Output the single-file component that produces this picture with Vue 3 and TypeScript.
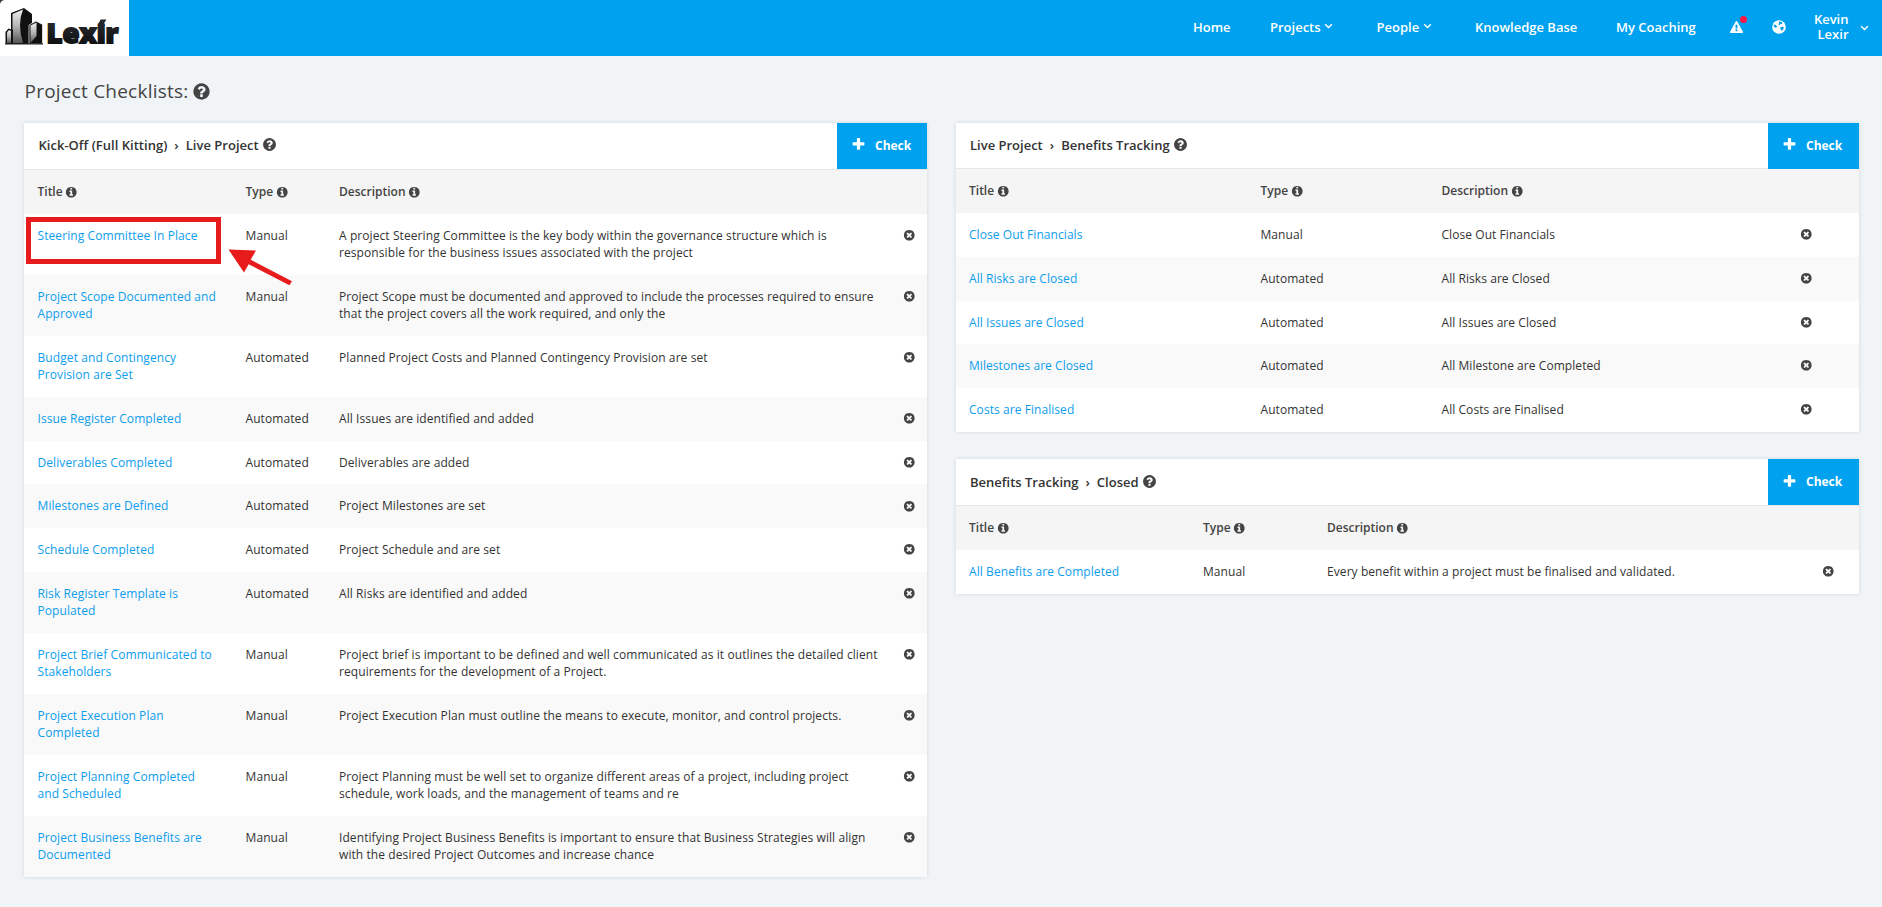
<script setup lang="ts">
interface Check {
  title: string
  type: 'Manual' | 'Automated'
  desc: string
  marked?: boolean
}
interface Panel {
  id: string
  from: string
  to: string
  rows: Check[]
}

const ring =
  'M1664 896q0 209-103 385.5t-279.5 279.5-385.5 103-385.5-103-279.5-279.5-103-385.5 103-385.5 279.5-279.5 385.5-103 385.5 103 279.5 279.5 103 385.5z'
const icons = {
  help:
    'M1024 1376v-192q0-14-9-23t-23-9h-192q-14 0-23 9t-9 23v192q0 14 9 23t23 9h192q14 0 23-9t9-23zM1280 704q0-88-55.5-163t-138.5-116-170-41q-243 0-371 213-15 24 8 42l132 100q7 6 19 6 16 0 25-12 53-68 86-92 34-24 86-24 48 0 85.5 26t37.5 59q0 38-20 61t-68 45q-63 28-115.5 86.5t-52.5 125.5v36q0 14 9 23t23 9h192q14 0 23-9t9-23q0-19 21.5-49.5t54.5-49.5q32-18 49-28.5t46-35 44.5-48 28-60.5 12.5-81z' + ring,
  info:
    'M1152 1376v-160q0-14-9-23t-23-9h-96v-512q0-14-9-23t-23-9h-320q-14 0-23 9t-9 23v160q0 14 9 23t23 9h96v320h-96q-14 0-23 9t-9 23v160q0 14 9 23t23 9h448q14 0 23-9t9-23zM1024 480v-160q0-14-9-23t-23-9h-192q-14 0-23 9t-9 23v160q0 14 9 23t23 9h192q14 0 23-9t9-23z' + ring,
  remove:
    'M1277 1122q0-26-19-45l-181-181 181-181q19-19 19-45 0-27-19-46l-90-90q-19-19-46-19-26 0-45 19l-181 181-181-181q-19-19-45-19-27 0-46 19l-90 90q-19 19-19 46 0 26 19 45l181 181-181 181q-19 19-19 45 0 27 19 46l90 90q19 19 46 19 26 0 45-19l181-181 181 181q19 19 45 19 27 0 46-19l90-90q19-19 19-46z' + ring,
  plus:
    'M1600 736v192q0 40-28 68t-68 28h-416v416q0 40-28 68t-68 28h-192q-40 0-68-28t-28-68v-416h-416q-40 0-68-28t-28-68v-192q0-40 28-68t68-28h416v-416q0-40 28-68t68-28h192q40 0 68 28t28 68v416h416q40 0 68 28t28 68z',
  warning:
    'M1024 1375v-190q0-14-9.5-23.5t-22.5-9.5h-192q-13 0-22.5 9.5t-9.5 23.5v190q0 14 9.5 23.5t22.5 9.5h192q13 0 22.5-9.5t9.5-23.5zM1022 1001l18-459q0-12-10-19-13-11-24-11h-220q-11 0-24 11-10 7-10 21l17 457q0 10 10 16.5t24 6.5h185q14 0 23.5-6.5t10.5-16.5zM1008 67l768 1408q35 63-2 126-17 29-46.5 46t-63.5 17h-1536q-34 0-63.5-17t-46.5-46q-37-63-2-126l768-1408q17-31 47-49t65-18 65 18 47 49z',
}

const columns: Panel[][] = [
  [
    {
      id: 'kickoff',
      from: 'Kick-Off (Full Kitting)',
      to: 'Live Project',
      rows: [
        { title: 'Steering Committee In Place', type: 'Manual', desc: 'A project Steering Committee is the key body within the governance structure which is\nresponsible for the business issues associated with the project', marked: true },
        { title: 'Project Scope Documented and\nApproved', type: 'Manual', desc: 'Project Scope must be documented and approved to include the processes required to ensure\nthat the project covers all the work required, and only the' },
        { title: 'Budget and Contingency\nProvision are Set', type: 'Automated', desc: 'Planned Project Costs and Planned Contingency Provision are set' },
        { title: 'Issue Register Completed', type: 'Automated', desc: 'All Issues are identified and added' },
        { title: 'Deliverables Completed', type: 'Automated', desc: 'Deliverables are added' },
        { title: 'Milestones are Defined', type: 'Automated', desc: 'Project Milestones are set' },
        { title: 'Schedule Completed', type: 'Automated', desc: 'Project Schedule and are set' },
        { title: 'Risk Register Template is\nPopulated', type: 'Automated', desc: 'All Risks are identified and added' },
        { title: 'Project Brief Communicated to\nStakeholders', type: 'Manual', desc: 'Project brief is important to be defined and well communicated as it outlines the detailed client\nrequirements for the development of a Project.' },
        { title: 'Project Execution Plan\nCompleted', type: 'Manual', desc: 'Project Execution Plan must outline the means to execute, monitor, and control projects.' },
        { title: 'Project Planning Completed\nand Scheduled', type: 'Manual', desc: 'Project Planning must be well set to organize different areas of a project, including project\nschedule, work loads, and the management of teams and re' },
        { title: 'Project Business Benefits are\nDocumented', type: 'Manual', desc: 'Identifying Project Business Benefits is important to ensure that Business Strategies will align\nwith the desired Project Outcomes and increase chance' },
      ],
    },
  ],
  [
    {
      id: 'live',
      from: 'Live Project',
      to: 'Benefits Tracking',
      rows: [
        { title: 'Close Out Financials', type: 'Manual', desc: 'Close Out Financials' },
        { title: 'All Risks are Closed', type: 'Automated', desc: 'All Risks are Closed' },
        { title: 'All Issues are Closed', type: 'Automated', desc: 'All Issues are Closed' },
        { title: 'Milestones are Closed', type: 'Automated', desc: 'All Milestone are Completed' },
        { title: 'Costs are Finalised', type: 'Automated', desc: 'All Costs are Finalised' },
      ],
    },
    {
      id: 'benefits',
      from: 'Benefits Tracking',
      to: 'Closed',
      rows: [
        { title: 'All Benefits are Completed', type: 'Manual', desc: 'Every benefit within a project must be finalised and validated.' },
      ],
    },
  ],
]
const heads = ['Title', 'Type', 'Description']
</script>

<template>
  <div class="page">
    <header class="topbar">
      <div class="logo">
        <svg width="129" height="56" viewBox="0 0 129 56">
          <defs>
            <linearGradient id="steel" x1="0" y1="0" x2="0" y2="1">
              <stop offset="0" stop-color="#f2f2f2" />
              <stop offset=".5" stop-color="#b5b5b5" />
              <stop offset="1" stop-color="#555" />
            </linearGradient>
            <linearGradient id="ink" x1="0" y1="0" x2="0" y2="1">
              <stop offset="0" stop-color="#303236" />
              <stop offset="1" stop-color="#08090b" />
            </linearGradient>
          </defs>
          <path d="M0 0h5Q1 0 0 4z" fill="#333" />
          <path d="M11 13L24 8l8 6v30H11z" fill="#111" />
          <path d="M12.500 14L23 9.500Q17 24 23 43H12.500z" fill="url(#steel)" />
          <path d="M5.500 32l3-3.500L13 30v14H5.500z" fill="#111" />
          <path d="M7 32.500l2-2.500 2 1v12H7z" fill="url(#steel)" />
          <path d="M29 25l7-4 6.500 3.500V44H29z" fill="#111" stroke="#fff" stroke-width=".7" />
          <path d="M30.500 25.500L36.500 22.500V36l-6 7z" fill="url(#steel)" />
          <path d="M5 43.800h38" stroke="#222" stroke-width="1.200" />
          <text x="46.500" y="43" textLength="72" lengthAdjust="spacingAndGlyphs" class="brand">Lexir</text>
          <path d="M98.500 24l2-4.500h6l-3 4.500z" fill="#25272b" />
        </svg>
      </div>
      <nav class="nav">
        <a>Home</a>
        <a>Projects<svg class="caret" viewBox="0 0 10 6"><path d="M1.300 1l3.700 3.600L8.700 1" /></svg></a>
        <a>People<svg class="caret" viewBox="0 0 10 6"><path d="M1.300 1l3.700 3.600L8.700 1" /></svg></a>
        <a>Knowledge Base</a>
        <a>My Coaching</a>
        <a class="alert">
          <svg width="13" height="13" viewBox="0 0 1792 1792"><path :d="icons.warning" fill-rule="evenodd" fill="#fff" /></svg>
          <i class="dot"></i>
        </a>
        <a class="globe">
          <svg width="14" height="14" viewBox="0 0 14 14">
            <circle cx="7" cy="7" r="6.800" fill="#fff" />
            <path d="M7 1.500l2.300.3 1.200 1.300-.8 1-1.200-.1-.9 1.100-1.200-.4.5-1.300zM8.400 7.200l2-.5 1.500.9-.7 1.900-1.700 1.500-.5-1.600-.9-1zM1.800 4.600l2 .5 1.200 1.400-.5 1.100-1.200.2-1.500-1.400z" fill="#00a2ef" />
          </svg>
        </a>
        <a class="user"><span>Kevin<br />Lexir</span></a>
        <a><svg class="caret solo" viewBox="0 0 10 6"><path d="M1.300 1l3.700 3.600L8.700 1" /></svg></a>
      </nav>
    </header>

    <h1 class="heading">
      Project Checklists:
      <svg width="19" height="19" viewBox="0 0 1792 1792"><path :d="icons.help" fill-rule="evenodd" /></svg>
    </h1>

    <main class="board">
      <div v-for="(col, c) in columns" :key="c" class="column">
        <section v-for="p in col" :key="p.id" class="panel" :class="p.id">
          <div class="panel-head">
            <h2>
              <span>{{ p.from }}</span><span class="sep">›</span><span>{{ p.to }}</span>
              <svg width="15" height="15" viewBox="0 0 1792 1792"><path :d="icons.help" fill-rule="evenodd" /></svg>
            </h2>
            <button class="add" type="button">
              <svg width="15" height="15" viewBox="0 0 1792 1792"><path :d="icons.plus" /></svg>
              <span>Check</span>
            </button>
          </div>
          <div class="row head">
            <div v-for="h in heads" :key="h" class="th">
              {{ h }}<svg width="12.500" height="12.500" viewBox="0 0 1792 1792"><path :d="icons.info" fill-rule="evenodd" /></svg>
            </div>
          </div>
          <div
            v-for="r in p.rows"
            :key="r.title"
            class="row item"
            :class="{ tall: r.title.includes('\n') || r.desc.includes('\n') }"
          >
            <div class="title">
              <a>{{ r.title }}</a>
              <template v-if="r.marked">
                <i class="frame"></i>
                <svg class="arrow" width="66" height="40" viewBox="0 0 66 40">
                  <path d="M1.500 2.500L29 3.500l-5.300 9.300L65 34.300l-2.600 4L21.700 17.200 17 25.500z" fill="#e81c1c" />
                </svg>
              </template>
            </div>
            <div>{{ r.type }}</div>
            <div>{{ r.desc }}</div>
            <div class="del">
              <svg width="12.500" height="12.500" viewBox="0 0 1792 1792"><path :d="icons.remove" fill-rule="evenodd" /></svg>
            </div>
          </div>
        </section>
      </div>
    </main>
  </div>
</template>

<style>
body {
  margin: 0;
  background: #f0f4f7;
}
</style>

<style scoped>
.page {
  min-height: 907px;
  background: #f0f4f7;
  font-family: 'Open Sans', 'Noto Sans', sans-serif;
  font-size: 12px;
  color: #333;
  overflow: hidden;
}
.page svg {
  fill: #444;
  flex: none;
}
.topbar {
  height: 56px;
  background: #00a2ef;
  display: flex;
  justify-content: space-between;
}
.logo {
  width: 129px;
  background: #fff;
}
.logo svg {
  display: block;
}
.brand {
  font: 800 27px 'Open Sans', sans-serif;
  fill: url(#ink);
  stroke: url(#ink);
  stroke-width: 1.8px;
}
.nav {
  display: grid;
  grid-template-columns: 77px 106.5px 98.5px 141px 113.5px 42px 42px 35px 34px;
  margin-right: -0.5px;
  align-items: center;
  height: 54px;
  color: #fff;
  font-size: 13px;
  font-weight: 600;
  line-height: 15px;
}
.nav a {
  display: flex;
  align-items: center;
  white-space: nowrap;
}
.page .caret {
  width: 9px;
  height: 6px;
  margin: 0 0 2px 3.5px;
  fill: none;
  stroke: #fff;
  stroke-width: 1.6;
}
.page .caret.solo {
  margin: 1px 0 0 11.5px;
}
.alert {
  position: relative;
}
.alert svg {
  margin-top: 1px;
}
.dot {
  position: absolute;
  left: 10px;
  top: -4px;
  width: 7px;
  height: 7px;
  border-radius: 50%;
  background: #ff1744;
}
.user {
  justify-content: flex-end;
  text-align: right;
}
.heading {
  margin: 0;
  padding: 21px 0 0 24.5px;
  height: 46px;
  font-size: 19px;
  line-height: 28px;
  font-weight: 500;
  letter-spacing: 0.22px;
  color: #444;
  display: flex;
  gap: 4px;
}
.heading svg {
  margin-top: 5px;
}
.board {
  display: grid;
  grid-template-columns: 903px 903px;
  column-gap: 29px;
  padding-left: 24px;
}
.column {
  display: flex;
  flex-direction: column;
  gap: 27.25px;
}
.panel {
  background: #fff;
  box-shadow: 0 0 4px rgba(0, 0, 0, 0.12);
}
.panel-head {
  height: 46px;
  border-bottom: 1px solid #e7e7e7;
  display: flex;
  justify-content: space-between;
}
.live .panel-head {
  height: 45px;
}
h2 {
  margin: 0;
  padding-left: 14px;
  display: flex;
  align-items: center;
  height: 43px;
  font-size: 13px;
  font-weight: 600;
  color: #333;
}
.kickoff h2 {
  padding-left: 14.5px;
  letter-spacing: 0.02px;
}
.benefits h2 {
  height: 46px;
}
.sep {
  margin: 0 7px;
}
h2 svg {
  margin: 0 0 0 3px;
}
.benefits h2 svg {
  margin-bottom: 1px;
}
.add {
  width: 90px;
  height: 46px;
  border: 0;
  padding: 0 0 2px 14px;
  background: #00a2ef;
  color: #fff;
  font: 700 12px 'Open Sans', sans-serif;
  display: flex;
  align-items: center;
  gap: 9px;
}
.add svg {
  fill: #fff;
  margin-bottom: 1px;
}
.live .add,
.benefits .add {
  width: 91px;
  gap: 9px;
}
.benefits .add {
  padding-bottom: 1px;
}
.row {
  display: grid;
  line-height: 17px;
  white-space: pre;
  padding: 13px 0 0 13.5px;
  box-sizing: border-box;
  letter-spacing: 0.085px;
}
.kickoff .row {
  grid-template-columns: 208px 93.5px 564px 1fr;
}
.live .row {
  grid-template-columns: 291.5px 181px 358px 1fr;
  padding-left: 13px;
  letter-spacing: 0.06px;
}
.benefits .row {
  grid-template-columns: 234px 124px 495px 1fr;
  padding-left: 13px;
  letter-spacing: 0.075px;
}
.page .head {
  height: 44px;
  background: #f5f5f5;
  font-weight: 600;
  color: #444;
  letter-spacing: 0;
}
.th {
  display: flex;
}
.th svg {
  margin: 2.5px 0 0 2.5px;
}
.item {
  height: 43.6px;
}
.live .item {
  height: 43.75px;
}
.item.tall {
  height: 61.08px;
}
.item:nth-child(even) {
  background: #f9f9f9;
}
.title {
  position: relative;
  color: #0d9ded;
}
.del svg {
  display: block;
  margin-top: 2.2px;
}
.frame {
  position: absolute;
  left: -11.5px;
  top: -10px;
  width: 185px;
  height: 37px;
  border: 5px solid #e81c1c;
}
.arrow {
  position: absolute;
  left: 189px;
  top: 20px;
}
</style>
